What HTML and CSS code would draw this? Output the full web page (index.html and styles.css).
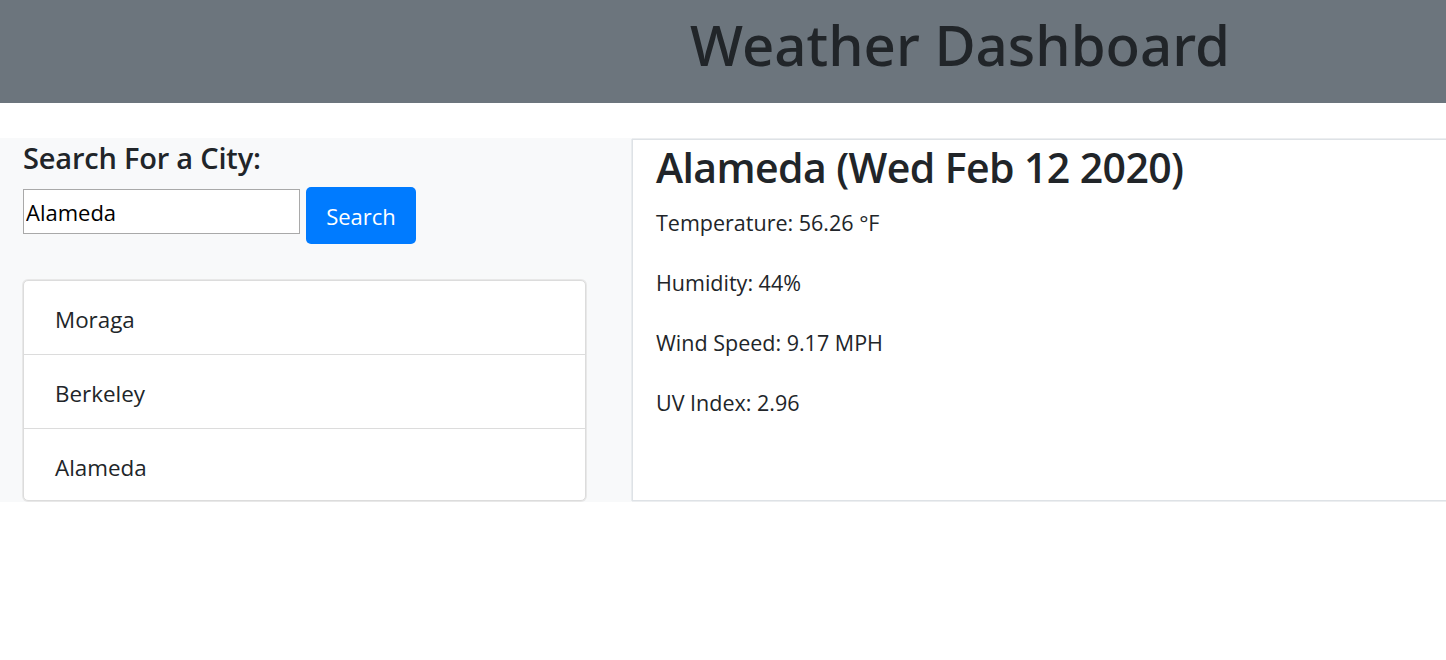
FILE: index.html
```html
<!DOCTYPE html>
<html lang="en">
<head>
<meta charset="utf-8">
<title>Weather Dashboard</title>
<link rel="stylesheet" href="styles.css">
</head>
<body>
<header class="hero">
  <div class="hero-spacer"></div>
  <h1 class="hero-title">Weather Dashboard</h1>
</header>
<main class="dash">
  <section class="side">
    <h4 class="side-title">Search For a City:</h4>
    <form class="search">
      <input class="search-input" type="text" value="Alameda">
      <button class="search-btn" type="button">Search</button>
    </form>
    <ul class="city-list">
      <li class="city-item">Moraga</li>
      <li class="city-item">Berkeley</li>
      <li class="city-item">Alameda</li>
    </ul>
  </section>
  <section class="current">
    <h2 class="current-title">Alameda (Wed Feb 12 2020)</h2>
    <p class="stat">Temperature: 56.26 °F</p>
    <p class="stat">Humidity: 44%</p>
    <p class="stat">Wind Speed: 9.17 MPH</p>
    <p class="stat">UV Index: 2.96</p>
  </section>
</main>
</body>
</html>
```
FILE: styles.css
```css
* { box-sizing: border-box; }
html, body { margin: 0; padding: 0; }
body {
  font-family: "Open Sans", "Noto Sans", sans-serif;
  color: #212529;
  background: #fff;
  overflow-x: hidden;
}
.hero {
  display: grid;
  grid-template-columns: 1fr 2fr;
  height: 103px;
  background: #6c757d;
  padding-top: 11px;
}
.hero-title {
  margin: 0 0 0 -8px;
  text-align: center;
  font-family: "Noto Sans", "Open Sans", sans-serif;
  font-size: 56.4px;
  font-weight: 500;
  line-height: 1.2;
  color: #212529;
}
.dash {
  display: flex;
  align-items: stretch;
  margin-top: 35px;
}
.side {
  width: 632px;
  flex: none;
  background: #f8f9fa;
  padding: 3px 46px 1px 23px;
}
.side-title {
  margin: 0;
  font-size: 29px;
  font-weight: 600;
  line-height: 1.2;
  letter-spacing: -0.2px;
}
.search {
  display: flex;
  align-items: flex-start;
  margin: 11px 0 0;
}
.search-input {
  width: 277px;
  height: 45px;
  margin-top: 2px;
  border: 1px solid #a9a9a9;
  background: #fff;
  padding: 2px 2px 0;
  font-family: "Open Sans", sans-serif;
  font-size: 22px;
  color: #000;
  border-radius: 0;
  outline: none;
}
.search-btn {
  width: 110px;
  height: 57px;
  margin-left: 6px;
  border: none;
  border-radius: 5px;
  background: #007bff;
  color: #fff;
  font-family: "Open Sans", sans-serif;
  font-size: 22px;
  line-height: 1;
  padding: 2px 0 0;
}
.city-list {
  list-style: none;
  margin: 36px 0 0;
  padding: 0;
  border: 1px solid #dcdcdc;
  border-radius: 5px;
  background: #fff;
  box-shadow: 0 0 0 1px #e8e8e8;
}
.city-item {
  padding: 22px 31px 18px;
  font-size: 22.4px;
  line-height: 33px;
  border-bottom: 1px solid #dcdcdc;
}
.city-item:last-child {
  border-bottom: none;
  padding-bottom: 16px;
}
.current {
  flex: 1;
  margin: 1px 0;
  border: 1px solid #dee2e6;
  border-right: none;
  box-shadow: -1px 0 0 #e9ecef, 0 -1px 0 #eceef0, 0 1px 0 #eceef0;
  background: #fff;
  padding: 3px 24px 0 23px;
}
.current-title {
  margin: 0 0 16px;
  font-size: 41px;
  font-weight: 600;
  line-height: 1.2;
  letter-spacing: -0.6px;
}
.stat {
  margin: 0 0 30px;
  font-size: 21.5px;
  line-height: 30px;
}
```
